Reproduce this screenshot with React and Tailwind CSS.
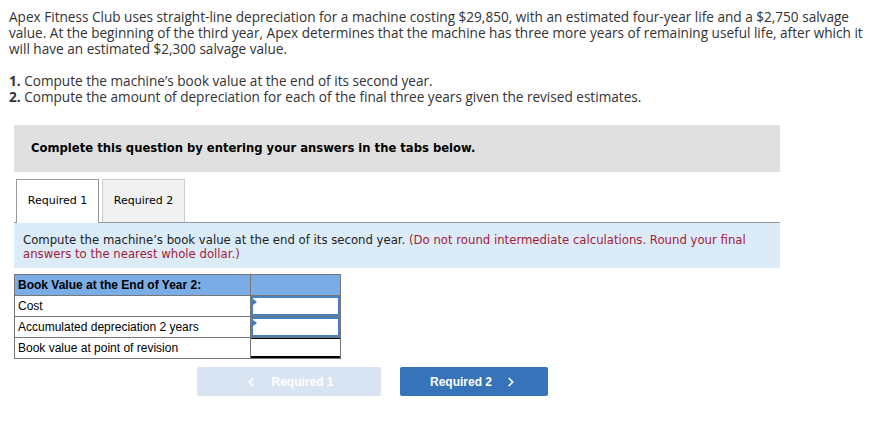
import { ChevronLeft, ChevronRight } from "lucide-react";

const rows = [
  { label: "Cost", input: true },
  { label: "Accumulated depreciation 2 years", input: true },
  { label: "Book value at point of revision", input: false },
];

export default function App() {
  return (
    <div className="w-[879px] h-[442px] bg-white overflow-hidden">
      <div className="w-[868px] pl-[9px] pt-[9px] text-[13.6px] leading-[16px] text-[#333] font-['Open_Sans',sans-serif]">
        <p>
          Apex Fitness Club uses straight-line depreciation for a machine costing $29,850, with an estimated four-year life
          and a $2,750 salvage value. At the beginning of the third year, Apex determines that the machine has three more
          years of remaining useful life, after which it will have an estimated $2,300 salvage value.
        </p>
        <p className="mt-4">
          <b>1.</b> Compute the machine’s book value at the end of its second year.
        </p>
        <p>
          <b>2.</b> Compute the amount of depreciation for each of the final three years given the revised estimates.
        </p>
      </div>

      <div className="ml-[14px] w-[766px] font-['DejaVu_Sans',Verdana,sans-serif]">
        <div className="mt-[20px] h-[47px] bg-[#e0e0e0] flex items-center pl-[17px] text-[11.6px] font-bold text-black">
          Complete this question by entering your answers in the tabs below.
        </div>

        <div className="mt-[7px] flex items-end gap-[3px] pl-[2px] border-b border-[#999]">
          <div className="w-[83px] h-[44px] bg-white border border-b-0 border-[#999] flex items-center justify-center text-[11px] text-black -mb-px">
            Required 1
          </div>
          <div className="w-[83px] h-[43px] bg-[#f1f1f1] border border-b-0 border-[#ccc] flex items-center justify-center text-[11px] text-black">
            Required 2
          </div>
        </div>

        <div className="h-[45px] bg-[#dbebf8] pl-[9px] pt-[10px] text-[11.7px] leading-[14px] text-[#222]">
          Compute the machine’s book value at the end of its second year.{" "}
          <span className="text-[#a41b38]">
            (Do not round intermediate calculations. Round your final answers to the nearest whole dollar.)
          </span>
        </div>

        <table className="mt-[6px] border-collapse font-['Liberation_Sans',Arial,sans-serif] text-[12px] text-black">
          <tbody>
            <tr className="h-[21px] bg-[#7aade6]">
              <td className="w-[236px] border border-[#777] pl-[3px] font-bold">Book Value at the End of Year 2:</td>
              <td className="w-[90px] border border-[#777]"></td>
            </tr>
            {rows.map((r) => (
              <tr key={r.label} className="h-[20px]">
                <td className="border border-[#777] pl-[3px] leading-[19px]">{r.label}</td>
                <td className="border border-[#777] p-0">
                  {r.input ? (
                    <div className="relative h-[20px] border-2 border-[#4a7fc0] bg-white">
                      <span className="absolute left-0 top-[1px] w-0 h-0 border-y-[3px] border-y-transparent border-l-[4px] border-l-[#3b78c4]"></span>
                    </div>
                  ) : (
                    <div className="h-[20px] border-t border-black border-b-2 bg-white"></div>
                  )}
                </td>
              </tr>
            ))}
          </tbody>
        </table>

        <div className="mt-[8px] ml-[183px] flex gap-[19px] font-['Liberation_Sans',Arial,sans-serif] text-[12px] font-bold text-white">
          <button className="w-[184px] h-[29px] rounded-[2px] bg-[#d9e4f2] flex items-center justify-center gap-[13px]">
            <ChevronLeft size={14} strokeWidth={3} />
            Required 1
          </button>
          <button className="w-[148px] h-[29px] rounded-[2px] bg-[#3673b8] flex items-center justify-center gap-[12px]">
            Required 2
            <ChevronRight size={14} strokeWidth={3} />
          </button>
        </div>
      </div>
    </div>
  );
}
